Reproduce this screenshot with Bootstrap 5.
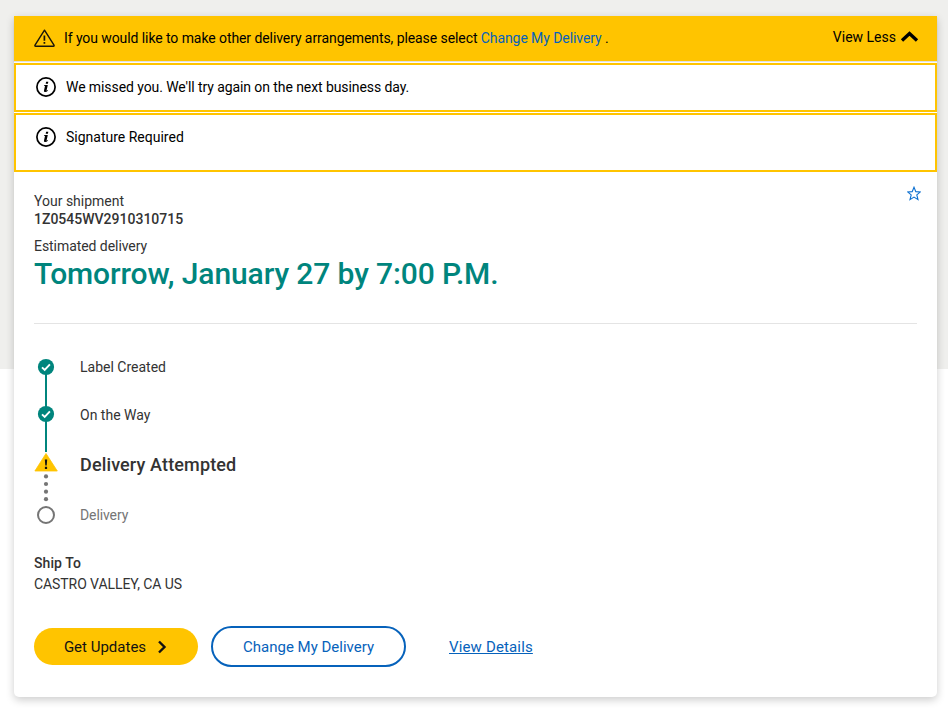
<!DOCTYPE html>
<html lang="en">
<head>
<meta charset="utf-8">
<meta name="viewport" content="width=device-width, initial-scale=1">
<title>Shipment tracking</title>
<link href="https://cdn.jsdelivr.net/npm/bootstrap@5.3.0/dist/css/bootstrap.min.css" rel="stylesheet">
<style>
  body { font-family: Roboto, sans-serif; font-size: 14px; line-height: 18px; color: #333; background: linear-gradient(#efefed 369px, #fff 369px) no-repeat; min-height: 709px; overflow: hidden; }
  a { color: #0662bb; }
  svg { display: block; flex: none; }
  .track-card { margin: 16px 11px 0 14px; height: 681px; border-radius: 0 0 5px 5px; box-shadow: 0 3px 8px rgba(0,0,0,.2); }
  .notice-main { background: #ffc400; height: 45px; padding: 0 18px 2px 20px; color: #000; box-shadow: 0 1px 1px rgba(0,0,0,.12); }
  .notice-text { margin-left: 9px; letter-spacing: -.083px; }
  .toggle-less { padding-bottom: 2px; }
  .notice-box { border: 2px solid #ffc400; padding: 12px 20px; color: #000; }
  .notice-box span { margin: 1px 0 0 10px; }
  .notice-one { height: 49px; margin-top: 2px; letter-spacing: -.083px; }
  .notice-two { height: 59px; margin-top: 1px; }
  .details { padding: 20px 20px 0; }
  .fw-mid { font-weight: 500; }
  .eta-label { margin-top: 9px; letter-spacing: -.06px; }
  .star { margin: -6px -4px 0 0; }
  .eta { color: #00857d; font-size: 30px; line-height: 36px; font-weight: 500; margin: 1px 0 0; letter-spacing: -.11px; }
  .rule { border-top: 1px solid #e4e4e4; margin-top: 31px; }
  .rail { width: 24px; margin-right: 22px; }
  .steps { margin-top: 34px; height: 168px; }
  .step-done { margin-bottom: 30px; }
  .step-current { font-size: 18px; line-height: 24px; font-weight: 500; letter-spacing: .14px; margin: -1px 0 29px; }
  .step-next { color: #757575; letter-spacing: -.1px; }
  .ship-label { margin-top: 28px; letter-spacing: .1px; }
  .ship-place { margin-top: 3px; letter-spacing: -.08px; }
  .actions { margin-top: 33px; height: 41px; }
  .pill { border-radius: 30px; font-size: 15px; line-height: 20px; }
  .pill-fill, .pill-fill:hover { background: #ffc400; color: #121212; width: 164px; height: 37px; border: 0; }
  .pill-fill svg { margin: 0 1px 0 11px; }
  .pill-line { border: 2px solid #0662bb; color: #0662bb; width: 195px; height: 41px; margin-left: 13px; }
  .plain { font-size: 15px; line-height: 20px; margin-left: 43px; letter-spacing: .15px; text-underline-offset: 1px; text-decoration-thickness: 1px; text-decoration-skip-ink: none; }
</style>
</head>
<body>
<main class="track-card bg-white">
  <div class="notice-main d-flex align-items-center">
    <svg width="21" height="20" viewBox="0 0 21 20" fill="none" stroke="#17150b"><path d="M10.5 2.200 1 17.200q-.5 1 .6 1h17.800q1.100 0 .6-1z" stroke-width="1.400" stroke-linejoin="round"/><path d="M10.400 7.500v5.200M10.400 14v1.700" stroke-width="1.700"/></svg>
    <span class="notice-text">If you would like to make other delivery arrangements, please select <a href="#" class="text-decoration-none">Change My Delivery</a> .</span>
    <span class="toggle-less ms-auto d-flex align-items-center">View Less
      <svg class="ms-1" width="19" height="14" viewBox="0 0 19 14" fill="none"><path d="m2 10.500 7.500-7 7.500 7" stroke="#000" stroke-width="3.300"/></svg></span>
  </div>
  <div class="notice-box notice-one d-flex align-items-start">
    <svg width="20" height="20" viewBox="0 0 20 20"><circle cx="10" cy="10" r="9.100" fill="none" stroke="#000" stroke-width="1.700"/><path d="M10.1 4.8h2.2l-.4 2h-2.2zM8.3 8h3.5l-1.2 5.2q-.1.7.4.4l1-.5-.1.7q-1.4 1.3-2.8 1.3-1.5 0-1.1-1.6l1-4.4-1-.3z"/></svg>
    <span>We missed you. We'll try again on the next business day.</span>
  </div>
  <div class="notice-box notice-two d-flex align-items-start">
    <svg width="20" height="20" viewBox="0 0 20 20"><circle cx="10" cy="10" r="9.100" fill="none" stroke="#000" stroke-width="1.700"/><path d="M10.1 4.8h2.2l-.4 2h-2.2zM8.3 8h3.5l-1.2 5.2q-.1.7.4.4l1-.5-.1.7q-1.4 1.3-2.8 1.3-1.5 0-1.1-1.6l1-4.4-1-.3z"/></svg>
    <span>Signature Required</span>
  </div>
  <section class="details">
    <div class="d-flex justify-content-between">
      <div>
        <div>Your shipment</div>
        <div class="fw-mid">1Z0545WV2910310715</div>
        <div class="eta-label">Estimated delivery</div>
      </div>
      <svg class="star" width="14" height="15" viewBox="0 0 14 15" fill="none"><path d="m7 1.200 1.800 4.400 4.600.3-3.600 3 1.200 4.700L7 11.100l-4 2.500 1.200-4.700-3.600-3 4.600-.3z" stroke="#0b6fd0" stroke-width="1.100"/></svg>
    </div>
    <h1 class="eta">Tomorrow, January 27 by 7:00 P.M.</h1>
    <div class="rule"></div>
    <div class="steps d-flex">
      <svg class="rail" height="168" viewBox="0 0 24 168">
        <path d="M12 9v85" stroke="#00857d" stroke-width="2"/>
        <circle cx="12" cy="9" r="8.1" fill="#00857d"/><circle cx="12" cy="56" r="8.1" fill="#00857d"/>
        <path d="m8 9.3 2.7 2.7 5.2-5.6M8 56.3l2.7 2.7 5.2-5.6" fill="none" stroke="#fff" stroke-width="1.9"/>
        <path d="M12 95.500 23.300 113H.9z" fill="#ffc400" stroke="#ffc400" stroke-linejoin="round" stroke-width=".8"/>
        <path d="M10.8 101.5h2.4l-.5 6h-1.4zM10.9 108.7h2.2v2.2h-2.2z" fill="#111"/>
        <g fill="#757575"><circle cx="12" cy="118.400" r="2.100"/><circle cx="12" cy="126" r="2.100"/><circle cx="12" cy="133.700" r="2.100"/><circle cx="12" cy="141.200" r="2.100"/></g>
        <circle cx="12" cy="157" r="8" fill="#fff" stroke="#757575" stroke-width="2"/>
      </svg>
      <div>
        <div class="step-done">Label Created</div>
        <div class="step-done">On the Way</div>
        <div class="step-current">Delivery Attempted</div>
        <div class="step-next">Delivery</div>
      </div>
    </div>
    <div class="fw-mid ship-label">Ship To</div>
    <div class="ship-place">CASTRO VALLEY, CA US</div>
    <div class="actions d-flex align-items-center">
      <button class="btn pill pill-fill d-flex align-items-center justify-content-center p-0">Get Updates
        <svg width="10" height="14" viewBox="0 0 10 14" fill="none"><path d="m2 1.500 5.500 5.500L2 12.500" stroke="#121212" stroke-width="2.400"/></svg></button>
      <button class="btn pill pill-line p-0">Change My Delivery</button>
      <a class="plain" href="#">View Details</a>
    </div>
  </section>
</main>
<script src="https://cdn.jsdelivr.net/npm/bootstrap@5.3.0/dist/js/bootstrap.bundle.min.js"></script>
</body>
</html>
